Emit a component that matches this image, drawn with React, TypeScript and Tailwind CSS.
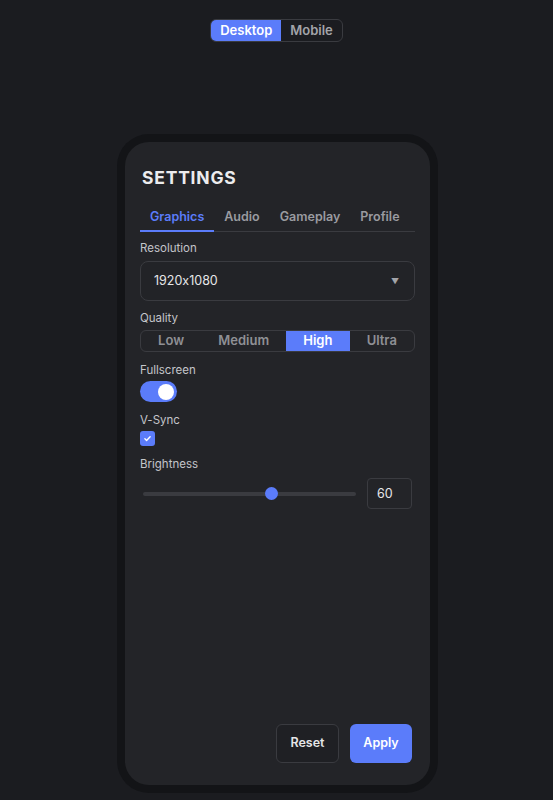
import { useState } from "react";

const tabs = ["Graphics", "Audio", "Gameplay", "Profile"];
const qualities = ["Low", "Medium", "High", "Ultra"];

export default function App() {
	const [view, setView] = useState<"desktop" | "mobile">("desktop");
	const [tab, setTab] = useState("Graphics");
	const [quality, setQuality] = useState("High");
	const [fullscreen, setFullscreen] = useState(true);
	const [vsync, setVsync] = useState(true);
	const [brightness, setBrightness] = useState(60);

	return (
		<div
			className="min-h-screen bg-[#1b1c20] flex flex-col items-center pt-[19px] text-[#e6e6e8] [font-feature-settings:'calt'_0]"
			style={{ fontFamily: "Inter, 'Noto Sans', sans-serif" }}
		>
			<div className="flex rounded-[6px] border border-[#3a3b40] overflow-hidden text-[13px] font-semibold">
				<button
					onClick={() => setView("desktop")}
					className={`h-[21px] px-[9px] ${view === "desktop" ? "bg-[#5b7cfa] text-white" : "text-[#a3a4a9]"}`}
				>
					Desktop
				</button>
				<button
					onClick={() => setView("mobile")}
					className={`h-[21px] px-[9px] ${view === "mobile" ? "bg-[#5b7cfa] text-white" : "text-[#a3a4a9]"}`}
				>
					Mobile
				</button>
			</div>

			<div className="mt-[92px] ml-[2px] w-[321px] h-[659px] rounded-[32px] bg-[#131417] p-[8px]">
				<div className="h-full rounded-[24px] bg-[#232428] flex flex-col px-[15px] pt-[24px] pb-[22px]">
					<h1 className="pl-[2px] text-[17.5px] leading-[24px] font-bold tracking-[0.045em] text-[#ececee]">SETTINGS</h1>

					<div className="mt-[17px] flex border-b border-[#3a3b40]">
						{tabs.map(t => (
							<button
								key={t}
								onClick={() => setTab(t)}
								className={`px-[10px] pb-[3px] text-[12.5px] leading-[20px] font-semibold -mb-px border-b-2 ${
									tab === t ? "text-[#5b7cfa] border-[#5b7cfa]" : "text-[#9a9ba0] border-transparent"
								}`}
							>
								{t}
							</button>
						))}
					</div>

					<label className="mt-[8px] text-[11.5px] leading-[16px] text-[#c4c5ca]">Resolution</label>
					<div className="mt-[5px] h-[40px] rounded-[8px] border border-[#3a3b40] bg-[#222327] flex items-center justify-between pl-[13px] pr-[15px]">
						<span className="text-[12.5px] text-[#e6e6e8]">1920x1080</span>
						<span className="text-[8px] text-[#a3a4a9]">▼</span>
					</div>

					<label className="mt-[9px] text-[11.5px] leading-[16px] text-[#c4c5ca]">Quality</label>
					<div className="mt-[4px] h-[22px] flex rounded-[6px] border border-[#3a3b40] overflow-hidden">
						{qualities.map(q => (
							<button
								key={q}
								onClick={() => setQuality(q)}
								className={`flex-auto text-[13px] font-semibold ${
									quality === q ? "bg-[#5b7cfa] text-white" : "text-[#8f9095]"
								}`}
							>
								{q}
							</button>
						))}
					</div>

					<label className="mt-[10px] text-[11.5px] leading-[16px] text-[#c4c5ca]">Fullscreen</label>
					<button
						onClick={() => setFullscreen(!fullscreen)}
						className={`mt-[3px] w-[37px] h-[21px] rounded-full flex items-center px-[3px] ${
							fullscreen ? "bg-[#5b7cfa] justify-end" : "bg-[#3a3b40] justify-start"
						}`}
					>
						<span className="w-[16px] h-[16px] rounded-full bg-white" />
					</button>

					<label className="mt-[10px] text-[11.5px] leading-[16px] text-[#c4c5ca]">V-Sync</label>
					<button
						onClick={() => setVsync(!vsync)}
						className={`mt-[3px] w-[15px] h-[15px] rounded-[3px] flex items-center justify-center ${
							vsync ? "bg-[#5b7cfa]" : "border border-[#3a3b40]"
						}`}
					>
						{vsync && (
							<svg width="9" height="9" viewBox="0 0 12 12" fill="none">
								<path d="M2.5 6.3l2.3 2.3 4.7-5" stroke="white" strokeWidth="1.8" strokeLinecap="round" strokeLinejoin="round" />
							</svg>
						)}
					</button>

					<label className="mt-[10px] text-[11.5px] leading-[16px] text-[#c4c5ca]">Brightness</label>
					<div className="mt-[6px] flex items-center gap-[11px] pr-[3px]">
						<div className="relative flex-1 h-[4px] ml-[3px] rounded-full bg-[#3a3b40]">
							<span
								className="absolute top-1/2 w-[13px] h-[13px] -ml-[6px] -mt-[6.5px] rounded-full bg-[#5b7cfa]"
								style={{ left: `${brightness}%` }}
							/>
						</div>
						<input
							value={brightness}
							onChange={e => setBrightness(Number(e.target.value) || 0)}
							className="w-[45px] h-[31px] rounded-[4px] border border-[#3a3b40] bg-transparent px-[9px] text-[12.5px] text-[#e6e6e8] outline-none"
						/>
					</div>

					<div className="mt-auto flex justify-end gap-[11px] pr-[3px]">
						<button className="w-[63px] h-[39px] rounded-[6px] border border-[#3a3b40] bg-[#1f2024] text-[12.5px] font-semibold text-[#e6e6e8]">
							Reset
						</button>
						<button className="w-[62px] h-[39px] rounded-[6px] bg-[#5b7cfa] text-[12.5px] font-semibold text-white">
							Apply
						</button>
					</div>
				</div>
			</div>
		</div>
	);
}
